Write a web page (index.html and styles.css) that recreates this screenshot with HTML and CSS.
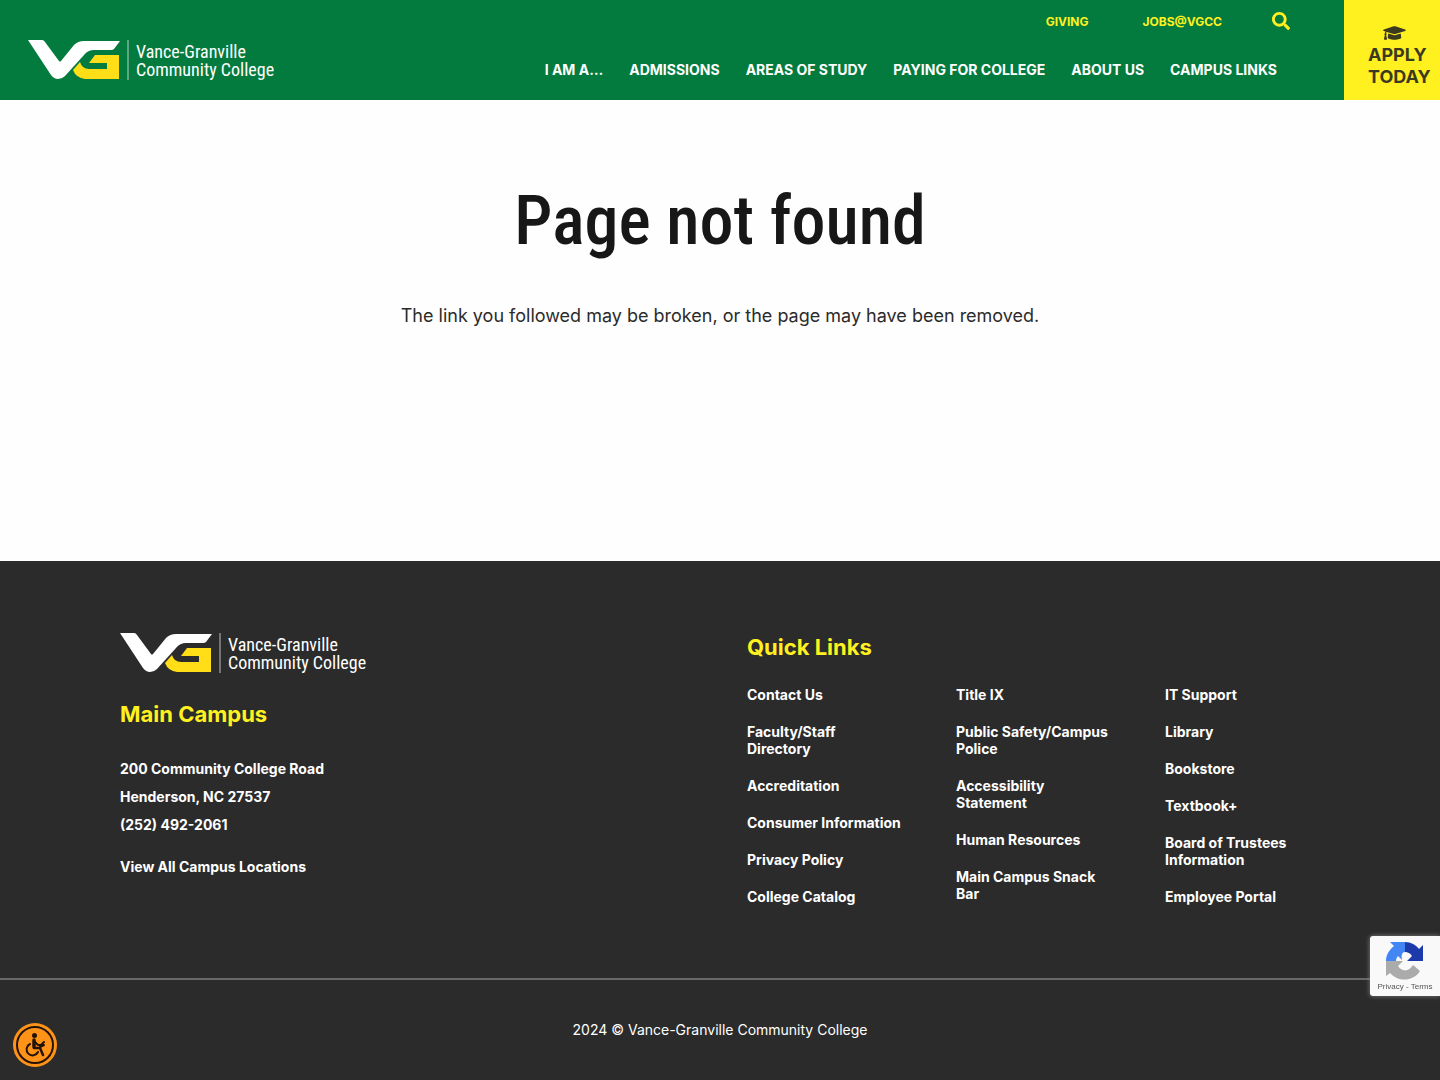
FILE: index.html
```html
<!DOCTYPE html>
<html lang="en">
<head>
<meta charset="utf-8">
<meta name="viewport" content="width=device-width, initial-scale=1">
<title>Page not found - Vance-Granville Community College</title>
<link rel="stylesheet" href="styles.css">
</head>
<body>
<svg width="0" height="0" class="sprite" aria-hidden="true">
  <symbol id="vg-mark" viewBox="0 0 101 40">
    <path fill="#fff" d="M0 0H14Q16 0 17 2L31 21Q32 22 33 21L46 5Q50 1 56 1H92L86 9Q85 10 83 10H66Q60 10 56 15L37 36Q34 39 30 39Q26 39 23 35Z"/>
    <path fill="#ffde17" d="M67 15H91V39H57Q48 38 45 30L52 22Q54 29 61 29H79V23H61Z"/>
    <path fill="#fff" fill-opacity=".35" d="M99 0h2v40h-2z"/>
  </symbol>
</svg>
<header class="site-header">
  <a class="logo" href="#"><svg class="logo-mark" aria-hidden="true"><use href="#vg-mark"/></svg><span>Vance-Granville<br>Community College</span></a>
  <div class="navs">
    <nav class="top-nav" aria-label="Utility">
      <a href="#">GIVING</a>
      <a href="#">JOBS@VGCC</a>
      <button class="search" type="button" aria-label="Search"><svg viewBox="0 0 512 512" width="18" height="18"><path fill="currentColor" d="M505 442.7L405.3 343c-4.5-4.5-10.6-7-17-7H372c27.6-35.3 44-79.7 44-128C416 93.1 322.9 0 208 0S0 93.1 0 208s93.1 208 208 208c48.3 0 92.7-16.4 128-44v16.3c0 6.4 2.5 12.5 7 17l99.7 99.7c9.4 9.4 24.6 9.4 33.9 0l28.3-28.3c9.4-9.4 9.4-24.6.1-34zM208 336c-70.7 0-128-57.2-128-128 0-70.7 57.2-128 128-128 70.7 0 128 57.2 128 128 0 70.7-57.2 128-128 128z"/></svg></button>
    </nav>
    <nav class="main-nav" aria-label="Main">
      <a href="#">I AM A…</a>
      <a href="#">ADMISSIONS</a>
      <a href="#">AREAS OF STUDY</a>
      <a href="#">PAYING FOR COLLEGE</a>
      <a href="#">ABOUT US</a>
      <a href="#">CAMPUS LINKS</a>
    </nav>
  </div>
  <a class="apply" href="#">
    <svg viewBox="0 0 640 512" width="23" height="18" aria-hidden="true"><path fill="currentColor" d="M622.34 153.2L343.4 67.5c-15.2-4.67-31.6-4.67-46.79 0L17.66 153.2c-23.54 7.23-23.54 38.36 0 45.59l48.63 14.94c-10.67 13.19-17.23 29.28-17.88 46.9C38.78 266.15 32 276.11 32 288c0 10.78 5.68 19.85 13.86 25.65L20.33 428.53C18.11 438.52 25.71 448 35.94 448h56.11c10.24 0 17.84-9.48 15.62-19.47L82.14 313.65C90.32 307.85 96 298.78 96 288c0-11.57-6.47-21.25-15.66-26.87.76-15.02 8.44-28.3 20.69-36.72L296.6 284.5c9.06 2.78 26.44 6.25 46.79 0l278.95-85.7c23.55-7.24 23.55-38.36 0-45.6zM352.79 315.09c-28.53 8.76-52.84 3.92-65.59 0l-145.02-44.55L128 384c0 35.35 85.96 64 192 64s192-28.65 192-64l-14.18-113.47-145.03 44.56z"/></svg>
    <span>APPLY<br>TODAY</span>
  </a>
</header>
<main class="content">
  <h1>Page not found</h1>
  <p>The link you followed may be broken, or the page may have been removed.</p>
</main>
<footer class="site-footer">
  <div class="footer-main">
    <section class="campus">
      <a class="logo" href="#"><svg class="logo-mark" aria-hidden="true"><use href="#vg-mark"/></svg><span>Vance-Granville<br>Community College</span></a>
      <h2>Main Campus</h2>
      <address>200 Community College Road<br>Henderson, NC 27537<br><a href="#">(252) 492-2061</a></address>
      <a href="#">View All Campus Locations</a>
    </section>
    <section class="quick">
      <h2>Quick Links</h2>
      <div class="link-columns">
        <ul>
          <li><a href="#">Contact Us</a></li>
          <li><a href="#">Faculty/Staff Directory</a></li>
          <li><a href="#">Accreditation</a></li>
          <li><a href="#">Consumer Information</a></li>
          <li><a href="#">Privacy Policy</a></li>
          <li><a href="#">College Catalog</a></li>
        </ul>
        <ul>
          <li><a href="#">Title IX</a></li>
          <li><a href="#">Public Safety/Campus Police</a></li>
          <li><a href="#">Accessibility Statement</a></li>
          <li><a href="#">Human Resources</a></li>
          <li><a href="#">Main Campus Snack Bar</a></li>
        </ul>
        <ul>
          <li><a href="#">IT Support</a></li>
          <li><a href="#">Library</a></li>
          <li><a href="#">Bookstore</a></li>
          <li><a href="#">Textbook+</a></li>
          <li><a href="#">Board of Trustees Information</a></li>
          <li><a href="#">Employee Portal</a></li>
        </ul>
      </div>
    </section>
  </div>
  <p class="copyright">2024 © Vance-Granville Community College</p>
</footer>
<button class="access" type="button" aria-label="Accessibility menu">
  <svg viewBox="0 0 44 44" width="44" height="44"><circle cx="22" cy="22" r="22" fill="#ff9318"/><circle cx="22" cy="22" r="18" fill="none" stroke="#241307" stroke-width="2"/><circle cx="21.500" cy="12.500" r="2.500" fill="#241307"/><g fill="none" stroke="#241307" stroke-linecap="round" stroke-linejoin="round"><path stroke-width="3.500" d="M21 17v7"/><path stroke-width="2" d="M21 18l4 4h3l3-3M27 24l4-2"/><path stroke-width="2.500" d="M21 25h6l3 7"/><path stroke-width="2" d="M17 21a6 6 0 1 0 8 8"/></g></svg>
</button>
<aside class="recaptcha" aria-label="reCAPTCHA">
  <svg viewBox="0 0 38 38" width="38" height="38" aria-hidden="true">
    <path fill="#1c3aa9" d="M19 0C25 0 30 3 33 7L37 3V19H21L26 14C24 11 22 10 19 10Z"/>
    <path fill="#4285f4" d="M19 0H4L8 4C3 8 0 13 0 19H10C10 17 11 15 12 14L16 18C15 13 16 10 19 10Z"/>
    <path fill="#ababab" d="M0 19V34L4 31C13 41 28 39 34 29L27 23C23 30 16 30 12 24L17 19Z"/>
  </svg>
  <p><a href="#">Privacy</a> - <a href="#">Terms</a></p>
</aside>
</body>
</html>
```
FILE: styles.css
```css
* { box-sizing: border-box; }
body {
  margin: 0;
  min-height: 100vh;
  display: flex;
  flex-direction: column;
  font-family: Inter, "Liberation Sans", sans-serif;
  color: #2b2b2b;
  background: #fefefe;
}
a { color: inherit; text-decoration: none; }
button { border: 0; padding: 0; background: none; cursor: pointer; }
svg { display: block; }
h1, h2, p, ul { margin: 0; padding: 0; }
.sprite { position: absolute; }

.site-header {
  display: flex;
  min-height: 100px;
  background: #047b3e;
  color: #fff;
}
.logo {
  display: flex;
  gap: 7px;
  color: #fff;
  font: 18px/18px "Roboto Condensed", "Liberation Sans Narrow", "Liberation Sans", sans-serif;
}
.logo span { padding-top: 3px; white-space: nowrap; }
.logo-mark { width: 101px; height: 40px; }
.site-header .logo { padding: 40px 0 0 28px; }
.navs {
  flex: 1;
  display: flex;
  flex-direction: column;
  align-items: flex-end;
  gap: 30px;
  padding: 10px 54px 0 0;
}
.top-nav {
  display: flex;
  align-items: center;
  gap: 54px;
  height: 22px;
  color: #fff11f;
  font-size: 12px;
  font-weight: 700;
}
.search { color: #fff11f; margin-left: -4px; height: 20px; }
.main-nav {
  display: flex;
  gap: 26px;
  padding-right: 13px;
  font-size: 14px;
  line-height: 16px;
  font-weight: 700;
  white-space: nowrap;
}
.apply {
  width: 96px;
  padding: 24px 0 0 24px;
  background: #fff11f;
  color: #3b3a20;
  font-size: 18px;
  line-height: 22px;
  font-weight: 700;
}
.apply svg { margin-left: 15px; }
.apply span { display: block; padding-top: 2px; }

.content {
  flex: 1;
  padding: 68px 24px 64px;
  text-align: center;
}
h1 {
  color: #171717;
  font: 500 68px/106px "Roboto Condensed", "Liberation Sans Narrow", "Liberation Sans", sans-serif;
}
.content p {
  margin-top: 28px;
  font-size: 18px;
  line-height: 28px;
}

.site-footer {
  background: #2b2b2b;
  color: #fff;
  font-size: 14px;
}
.footer-main {
  display: flex;
  justify-content: space-between;
  max-width: 1200px;
  margin: 0 auto;
  padding: 72px 0 73px;
  font-weight: 700;
}
h2 {
  color: #fff11f;
  font-size: 22px;
  line-height: 28px;
  font-weight: 700;
}
.campus h2 { margin-top: 27px; }
address {
  margin: 27px 0 19px;
  font-style: normal;
  line-height: 28px;
}
.link-columns {
  display: grid;
  grid-template-columns: repeat(3, 155px);
  gap: 54px;
  margin-top: 25px;
  line-height: 17px;
}
.link-columns ul {
  display: flex;
  flex-direction: column;
  gap: 20px;
  list-style: none;
}
.copyright {
  border-top: 2px solid #686868;
  padding: 39px 24px 40px;
  line-height: 21px;
  text-align: center;
}

.access { position: fixed; left: 13px; bottom: 13px; }
.recaptcha {
  position: fixed;
  right: 0;
  bottom: 84px;
  width: 70px;
  height: 60px;
  padding-top: 6px;
  border-radius: 3px 0 0 3px;
  background: #f9f9f9;
  box-shadow: 0 0 5px #808080;
  color: #555;
}
.recaptcha svg { margin: 0 auto; }
.recaptcha p {
  font: 8px/14px "Liberation Sans", sans-serif;
  text-align: center;
}
```
